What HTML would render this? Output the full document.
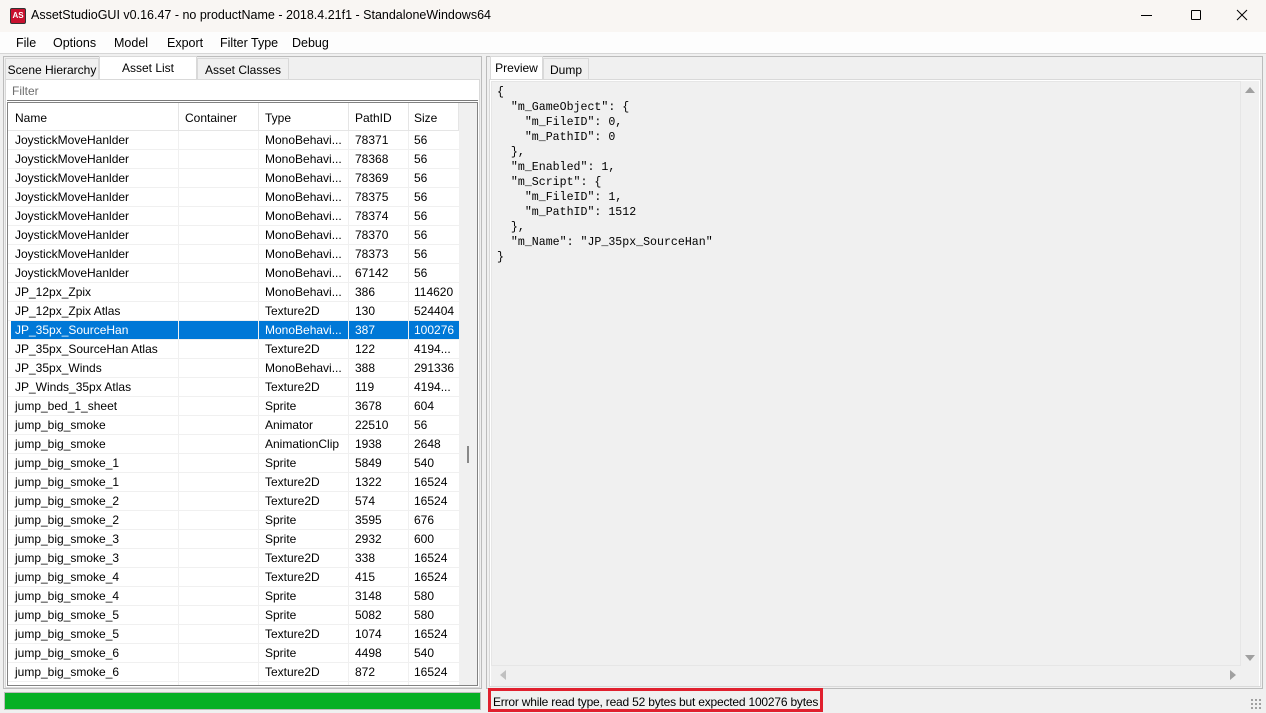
<!DOCTYPE html>
<html><head><meta charset="utf-8"><style>
*{box-sizing:border-box;margin:0;padding:0}
body{width:1266px;height:713px;overflow:hidden;background:#f0f0f0;font-family:"Liberation Sans",sans-serif;font-size:12px;color:#000;position:relative}
.a{position:absolute}
.title{left:0;top:0;width:1266px;height:32px;background:#f9f6f3}
.menu{left:0;top:32px;width:1266px;height:22px;background:#fdfdfd;border-bottom:1px solid #d6d6d6}
.menu span{position:absolute;top:4px;font-size:12.5px}
.tab{position:absolute;height:22px;border:1px solid #d9d9d9;border-bottom:none;background:#f0f0f0;font-size:12px;padding-top:4px;text-align:center}
.list{left:7px;top:102px;width:471px;height:584px;background:#fff;border:1px solid #828282;overflow:hidden}
.row{position:absolute;left:0;width:451px;height:19px;border-bottom:1px solid #f0f0f0}
.row span{position:absolute;top:2px;white-space:nowrap}
.c{position:absolute;top:0;bottom:0;border-left:1px solid #f0f0f0}
.sel{background:#0078d7;color:#fff}
.mono{font-family:"Liberation Mono",monospace;font-size:11.6px;white-space:pre;line-height:15px}
</style></head><body>
<div class="a title"></div>
<div class="a" style="left:10px;top:8px;width:16px;height:16px;background:#c8102e;border-radius:2px;border:1px solid #333;color:#fff;font-size:8px;font-weight:bold;text-align:center;line-height:14px">AS</div>
<div class="a" style="left:31px;top:8px;font-size:12.5px">AssetStudioGUI v0.16.47 - no productName - 2018.4.21f1 - StandaloneWindows64</div>
<div class="a" style="left:1141px;top:15px;width:11px;height:1px;background:#000"></div>
<div class="a" style="left:1191px;top:10px;width:10px;height:10px;border:1px solid #000;border-radius:1px"></div>
<svg class="a" style="left:1236px;top:9px" width="12" height="12"><path d="M1 1L11 11M11 1L1 11" stroke="#000" stroke-width="1"/></svg>
<div class="a menu"><span style="left:16px">File</span><span style="left:53px">Options</span><span style="left:114px">Model</span><span style="left:167px">Export</span><span style="left:220px">Filter Type</span><span style="left:292px">Debug</span></div>

<div class="a" style="left:3px;top:56px;width:479px;height:633px;border:1px solid #bcbcbc"></div>
<div class="tab" style="left:5px;top:58px;width:94px">Scene Hierarchy</div>
<div class="tab" style="left:99px;top:56px;width:98px;height:24px;background:#fff;padding-top:4px">Asset List</div>
<div class="tab" style="left:197px;top:58px;width:92px">Asset Classes</div>
<div class="a" style="left:5px;top:79px;width:475px;height:609px;background:#fff;border:1px solid #d9d9d9"></div>
<div class="a" style="left:7px;top:80px;width:471px;height:21px;background:#fff;border-bottom:1px solid #7a7a7a;color:#6d6d6d;padding:4px 5px">Filter</div>
<div class="a list">
 <div class="a" style="left:0;top:0;width:469px;height:28px;background:#fff;border-bottom:1px solid #e5e5e5"></div>
 <div class="a" style="left:7px;top:8px">Name</div><div class="a" style="left:177px;top:8px">Container</div><div class="a" style="left:257px;top:8px">Type</div><div class="a" style="left:347px;top:8px">PathID</div><div class="a" style="left:406px;top:8px">Size</div>
 <div class="c" style="left:170px;height:28px;border-color:#e5e5e5"></div><div class="c" style="left:250px;height:28px;border-color:#e5e5e5"></div><div class="c" style="left:340px;height:28px;border-color:#e5e5e5"></div><div class="c" style="left:400px;height:28px;border-color:#e5e5e5"></div><div class="c" style="left:450px;height:28px;border-color:#e5e5e5"></div>
 <div class="a" style="left:451px;top:0;width:19px;height:584px;background:#f0f0f0"></div>
 <div class="a" style="left:459px;top:343px;width:2px;height:17px;background:#888"></div>
 <div id="rows"></div>
 <div class="c" style="left:170px;top:28px"></div><div class="c" style="left:250px;top:28px"></div><div class="c" style="left:340px;top:28px"></div><div class="c" style="left:400px;top:28px"></div>
</div>
<div class="a" style="left:4px;top:692px;width:477px;height:18px;background:#06b025;border:1px solid #bcbcbc"></div>

<div class="a" style="left:486px;top:56px;width:777px;height:633px;border:1px solid #bcbcbc"></div>
<div class="tab" style="left:490px;top:56px;width:53px;height:24px;background:#fff">Preview</div>
<div class="tab" style="left:543px;top:58px;width:46px">Dump</div>
<div class="a" style="left:489px;top:79px;width:772px;height:608px;background:#fff;border:1px solid #d9d9d9"></div>
<div class="a" style="left:491px;top:81px;width:768px;height:605px;background:#f0f0f0"></div>
<div class="a" style="left:491px;top:81px;width:750px;height:585px;background:#f0f0f0;border:1px solid #e6e6e6"></div>
<div class="a mono" style="left:497px;top:85px">{
  "m_GameObject": {
    "m_FileID": 0,
    "m_PathID": 0
  },
  "m_Enabled": 1,
  "m_Script": {
    "m_FileID": 1,
    "m_PathID": 1512
  },
  "m_Name": "JP_35px_SourceHan"
}</div>
<svg class="a" style="left:1245px;top:86px" width="10" height="8"><path d="M0 7L5 1L10 7Z" fill="#a0a0a0"/></svg>
<svg class="a" style="left:1245px;top:654px" width="10" height="8"><path d="M0 1L5 7L10 1Z" fill="#a0a0a0"/></svg>
<svg class="a" style="left:499px;top:670px" width="8" height="10"><path d="M7 0L1 5L7 10Z" fill="#c0c0c0"/></svg>
<svg class="a" style="left:1229px;top:670px" width="8" height="10"><path d="M1 0L7 5L1 10Z" fill="#a0a0a0"/></svg>
<div class="a" style="left:488px;top:688px;width:335px;height:24px;border:3px solid #e0202e;padding:4px 2px;white-space:nowrap;font-size:12px;letter-spacing:-0.2px">Error while read type, read 52 bytes but expected 100276 bytes</div>
<div class="a" style="left:1250px;top:698px;width:12px;height:12px;background:radial-gradient(#999 1px,transparent 1.2px) 0 0/4px 4px"></div>

<script>
var d=[["JoystickMoveHanlder","MonoBehavi...","78371","56"],["JoystickMoveHanlder","MonoBehavi...","78368","56"],["JoystickMoveHanlder","MonoBehavi...","78369","56"],["JoystickMoveHanlder","MonoBehavi...","78375","56"],["JoystickMoveHanlder","MonoBehavi...","78374","56"],["JoystickMoveHanlder","MonoBehavi...","78370","56"],["JoystickMoveHanlder","MonoBehavi...","78373","56"],["JoystickMoveHanlder","MonoBehavi...","67142","56"],["JP_12px_Zpix","MonoBehavi...","386","114620"],["JP_12px_Zpix Atlas","Texture2D","130","524404"],["JP_35px_SourceHan","MonoBehavi...","387","100276"],["JP_35px_SourceHan Atlas","Texture2D","122","4194..."],["JP_35px_Winds","MonoBehavi...","388","291336"],["JP_Winds_35px Atlas","Texture2D","119","4194..."],["jump_bed_1_sheet","Sprite","3678","604"],["jump_big_smoke","Animator","22510","56"],["jump_big_smoke","AnimationClip","1938","2648"],["jump_big_smoke_1","Sprite","5849","540"],["jump_big_smoke_1","Texture2D","1322","16524"],["jump_big_smoke_2","Texture2D","574","16524"],["jump_big_smoke_2","Sprite","3595","676"],["jump_big_smoke_3","Sprite","2932","600"],["jump_big_smoke_3","Texture2D","338","16524"],["jump_big_smoke_4","Texture2D","415","16524"],["jump_big_smoke_4","Sprite","3148","580"],["jump_big_smoke_5","Sprite","5082","580"],["jump_big_smoke_5","Texture2D","1074","16524"],["jump_big_smoke_6","Sprite","4498","540"],["jump_big_smoke_6","Texture2D","872","16524"],["","","",""]];
var h="";d.forEach(function(r,i){h+='<div class="row'+(i==10?' sel':'')+'" style="top:'+(28+19*i)+'px;left:'+(i==10?3:0)+'px;width:'+(i==10?448:451)+'px"><span style="left:'+(i==10?4:7)+'px">'+r[0]+'</span><span style="left:'+(i==10?254:257)+'px">'+r[1]+'</span><span style="left:'+(i==10?344:347)+'px">'+r[2]+'</span><span style="left:'+(i==10?403:406)+'px">'+r[3]+'</span>'+(i==10?'<i class="c" style="left:167px;border-color:#fff"></i><i class="c" style="left:247px;border-color:#fff"></i><i class="c" style="left:337px;border-color:#fff"></i><i class="c" style="left:397px;border-color:#fff"></i>':'')+'</div>';});
document.getElementById("rows").innerHTML=h;
</script>
</body></html>
